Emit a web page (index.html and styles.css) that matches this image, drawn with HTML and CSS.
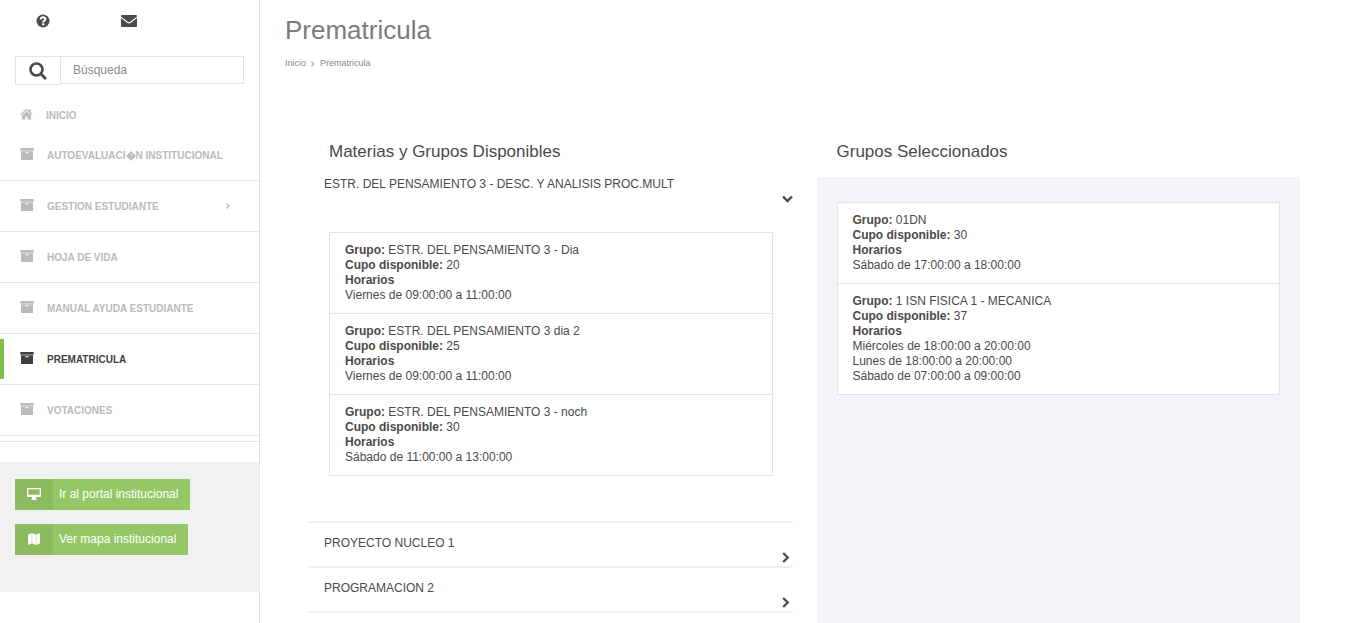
FILE: index.html
```html
<!DOCTYPE html>
<html lang="es">
<head>
<meta charset="utf-8">
<title>Prematricula</title>
<link rel="stylesheet" href="styles.css">
</head>
<body>
<svg class="sprite" aria-hidden="true">
  <symbol id="archive" viewBox="0 0 14 13">
    <path d="M0.300 0h13.400v2.700H0.300z"/>
    <path fill-rule="evenodd" d="M1 3.200h12V12H1zM5.300 4.300v1h3.400v-1z"/>
  </symbol>
  <symbol id="right" viewBox="0 0 11 12">
    <path d="M1.200 1 5.700 5.500 1.200 10" fill="none" stroke="currentColor" stroke-width="2.400"/>
  </symbol>
  <symbol id="down" viewBox="0 0 11 12">
    <path d="M1 3.500 5.500 8 10 3.500" fill="none" stroke="currentColor" stroke-width="2.400"/>
  </symbol>
  <symbol id="angle" viewBox="0 0 6 8">
    <path d="M1.500 1.500 4 4 1.500 6.500" fill="none" stroke="currentColor" stroke-width="1.200"/>
  </symbol>
</svg>
<div class="page">
  <aside class="sidebar">
    <div class="shortcuts">
      <a href="#ayuda" aria-label="Ayuda"><svg class="icon-help" viewBox="0 0 14 14"><circle cx="7" cy="7" r="6.500"/><path d="M4.700 5.300C4.900 3.800 6 3.300 7.100 3.300c1.300 0 2.300.8 2.300 1.900C9.400 6.600 7.200 6.700 7.200 8.400" fill="none" stroke="#fff" stroke-width="2"/><path d="M6.100 9.300h2.200v2H6.100z" fill="#fff"/></svg></a>
      <a href="#mensajes" aria-label="Mensajes"><svg class="icon-mail" viewBox="0 0 16 12"><path d="M1 0h14Q16 0 16 1.200C15 2.800 11 5.400 9.200 6.700 8.400 7.200 7.600 7.200 6.800 6.700 5 5.400 1 2.800 0 1.200Q0 0 1 0z"/><path d="M0 3C2 4.700 4.500 6.400 6.200 7.700 7.400 8.500 8.600 8.500 9.800 7.700 11.500 6.400 14 4.700 16 3v8Q16 12 15 12H1Q0 12 0 11z"/></svg></a>
    </div>
    <form class="search">
      <button type="button" aria-label="Buscar"><svg class="icon-search" viewBox="0 0 18 18"><circle cx="7.500" cy="7.500" r="6" fill="none" stroke="currentColor" stroke-width="2.600"/><path d="M12 12l5 5" stroke="currentColor" stroke-width="3"/></svg></button>
      <input type="text" placeholder="Búsqueda" aria-label="Búsqueda">
    </form>
    <nav class="menu">
      <div class="entry plain"><a href="#inicio"><svg class="icon-menu" viewBox="0 0 14 13"><path d="M6.500.8.300 6.300l.9.900 5.300-4.600 5.300 4.600.9-.9-2-1.800V1.200H9v1.600z"/><path d="M6.500 3.500 2 7.400V11.500h3.400V8.400h2.200v3.100H11V7.400z"/></svg><span>Inicio</span></a></div>
      <div class="entry"><a href="#autoevaluacion"><svg class="icon-menu"><use href="#archive"/></svg><span>Autoevaluaci�n Institucional</span></a></div>
      <div class="entry"><a href="#gestion"><svg class="icon-menu"><use href="#archive"/></svg><span>Gestion Estudiante</span><svg class="icon-angle"><use href="#angle"/></svg></a></div>
      <div class="entry"><a href="#hoja"><svg class="icon-menu"><use href="#archive"/></svg><span>Hoja de Vida</span></a></div>
      <div class="entry"><a href="#manual"><svg class="icon-menu"><use href="#archive"/></svg><span>Manual Ayuda Estudiante</span></a></div>
      <div class="entry"><a class="active" href="#prematricula"><svg class="icon-menu"><use href="#archive"/></svg><span>Prematricula</span></a></div>
      <div class="entry"><a href="#votaciones"><svg class="icon-menu"><use href="#archive"/></svg><span>Votaciones</span></a></div>
    </nav>
    <div class="portal">
      <a class="btn" href="#portal"><span class="btn-icon"><svg viewBox="0 0 14 12"><path fill-rule="evenodd" d="M1 0h12q1 0 1 1v7q0 1-1 1H9v1.500h.5V12h-5v-1.500H5V9H1Q0 9 0 8V1q0-1 1-1zM1.300 1.300v5.500h11.400V1.300z"/></svg></span>Ir al portal institucional</a>
      <a class="btn" href="#mapa"><span class="btn-icon"><svg viewBox="0 0 14 12"><path d="M1 1.500 4.800 0v10.500L1 12zM4.800 0l4.400 1.500V12l-4.400-1.500zM9.200 1.500 13 0v10.500L9.200 12z" stroke="#96c766" stroke-width=".2"/></svg></span>Ver mapa institucional</a>
    </div>
  </aside>
  <main class="main">
    <header class="head">
      <h1>Prematricula</h1>
      <nav class="crumbs"><a href="#inicio">Inicio</a><svg class="icon-angle"><use href="#angle"/></svg><a href="#prematricula">Prematricula</a></nav>
    </header>
    <div class="columns">
      <section class="available">
        <h2>Materias y Grupos Disponibles</h2>
        <div class="subject">
          <button class="subject-title" type="button" aria-expanded="true"><span>ESTR. DEL PENSAMIENTO 3 - DESC. Y ANALISIS PROC.MULT</span><svg class="icon-chevron"><use href="#down"/></svg></button>
          <div class="subject-body">
            <ul class="groups">
              <li><b>Grupo:</b> ESTR. DEL PENSAMIENTO 3 - Dia<br><b>Cupo disponible:</b> 20<br><b>Horarios</b><br>Viernes de 09:00:00 a 11:00:00</li>
              <li><b>Grupo:</b> ESTR. DEL PENSAMIENTO 3 dia 2<br><b>Cupo disponible:</b> 25<br><b>Horarios</b><br>Viernes de 09:00:00 a 11:00:00</li>
              <li><b>Grupo:</b> ESTR. DEL PENSAMIENTO 3 - noch<br><b>Cupo disponible:</b> 30<br><b>Horarios</b><br>Sábado de 11:00:00 a 13:00:00</li>
            </ul>
          </div>
        </div>
        <div class="subject">
          <button class="subject-title" type="button" aria-expanded="false"><span>PROYECTO NUCLEO 1</span><svg class="icon-chevron"><use href="#right"/></svg></button>
        </div>
        <div class="subject">
          <button class="subject-title" type="button" aria-expanded="false"><span>PROGRAMACION 2</span><svg class="icon-chevron"><use href="#right"/></svg></button>
        </div>
      </section>
      <section class="selected">
        <h2>Grupos Seleccionados</h2>
        <div class="panel">
          <ul class="groups">
            <li><b>Grupo:</b> 01DN<br><b>Cupo disponible:</b> 30<br><b>Horarios</b><br>Sábado de 17:00:00 a 18:00:00</li>
            <li><b>Grupo:</b> 1 ISN FISICA 1 - MECANICA<br><b>Cupo disponible:</b> 37<br><b>Horarios</b><br>Miércoles de 18:00:00 a 20:00:00<br>Lunes de 18:00:00 a 20:00:00<br>Sábado de 07:00:00 a 09:00:00</li>
          </ul>
        </div>
      </section>
    </div>
  </main>
</div>
</body>
</html>
```
FILE: styles.css
```css
* { box-sizing: border-box; }
body {
  margin: 0;
  background: #fff;
  color: #4a4a4a;
  font: 12px/15px "Liberation Sans", Arial, sans-serif;
}
a { color: inherit; text-decoration: none; }
h1, h2, ul { margin: 0; padding: 0; font-weight: normal; }
button, input { font: inherit; color: inherit; }
svg { display: block; fill: currentColor; flex: none; }
.sprite { display: none; }
.page { display: flex; min-height: 100vh; }

.sidebar { width: 260px; flex: none; border-right: 1px solid #e4e4e4; }
.shortcuts {
  display: grid;
  grid-template-columns: repeat(3, 1fr);
  height: 41px;
}
.shortcuts a { display: flex; align-items: center; justify-content: center; }
.icon-help { width: 14px; height: 14px; }
.icon-mail { width: 16px; height: 12px; }
.search { display: flex; align-items: flex-start; margin: 15px 15px 10px; }
.search button {
  width: 46px;
  height: 29px;
  padding: 0;
  display: flex;
  align-items: center;
  justify-content: center;
  background: #fff;
  border: 1px solid #e4e4e4;
}
.icon-search { width: 18px; height: 18px; }
.search input {
  flex: 1;
  min-width: 0;
  height: 28px;
  padding: 0 12px;
  background: #fff;
  border: 1px solid #e4e4e4;
  border-left: 0;
}
.search input::placeholder { color: #8c8c8c; opacity: 1; }

.menu { border-bottom: 1px solid #e4e4e4; padding-bottom: 5px; }
.entry { padding: 5px 0; border-bottom: 1px solid #e4e4e4; }
.entry.plain, .entry.plain + .entry { padding-top: 0; }
.entry.plain { padding-bottom: 0; border: 0; }
.entry.plain a { gap: 12px; }
.entry a {
  display: flex;
  align-items: center;
  gap: 13px;
  height: 40px;
  padding: 0 28px 0 20px;
  color: #b9bbbd;
  font-size: 10px;
  font-weight: bold;
  text-transform: uppercase;
}
.entry .active { color: #404040; border-left: 4px solid #7dc243; padding-left: 16px; }
.icon-menu { width: 14px; height: 13px; margin-bottom: 2px; }
.icon-angle { width: 6px; height: 8px; }
.entry .icon-angle { margin-left: auto; }

.portal {
  display: flex;
  flex-direction: column;
  align-items: flex-start;
  gap: 14px;
  margin-top: 20px;
  padding: 17px 15px 37px;
  background: #f1f1f1;
}
.btn {
  display: flex;
  align-items: center;
  gap: 6px;
  height: 31px;
  padding-right: 12px;
  background: #96c766;
  color: #fff;
}
.btn-icon {
  display: flex;
  align-items: center;
  justify-content: center;
  width: 38px;
  height: 31px;
  padding-bottom: 2px;
  background: #8cbb5f;
}
.btn-icon svg { width: 14px; height: 12px; }

.main { flex: 1; min-width: 0; display: flex; flex-direction: column; }
.head { padding: 15px 25px 0; height: 139px; }
h1 { font-size: 26px; line-height: 30px; color: #7b7b7b; }
.crumbs {
  display: flex;
  align-items: center;
  gap: 4px;
  margin-top: 11px;
  font-size: 9px;
  color: #888;
}
.crumbs svg { color: #b0b0b0; }
.columns {
  flex: 1;
  display: grid;
  grid-template-columns: 1fr 1fr;
  gap: 24px;
  padding: 0 49px;
}
h2 { padding: 0 20px; font-size: 17px; line-height: 25px; }
.subject { border-bottom: 2px solid #f0f0f0; }
.subject-title {
  display: flex;
  flex-direction: column;
  align-items: flex-start;
  gap: 1px;
  width: 100%;
  padding: 13px 0 2px 15px;
  background: none;
  border: 0;
  text-align: left;
}
.icon-chevron { width: 11px; height: 12px; align-self: flex-end; }
.subject-body { padding: 25px 20px 45px; }
.groups { list-style: none; background: #fff; border: 1px solid #e4e4e4; }
.groups li { padding: 10px 15px; }
.groups li + li { border-top: 1px solid #e4e4e4; }
.selected { display: flex; flex-direction: column; gap: 13px; }
.panel { flex: 1; padding: 25px 20px; background: #f3f4f9; }
```
